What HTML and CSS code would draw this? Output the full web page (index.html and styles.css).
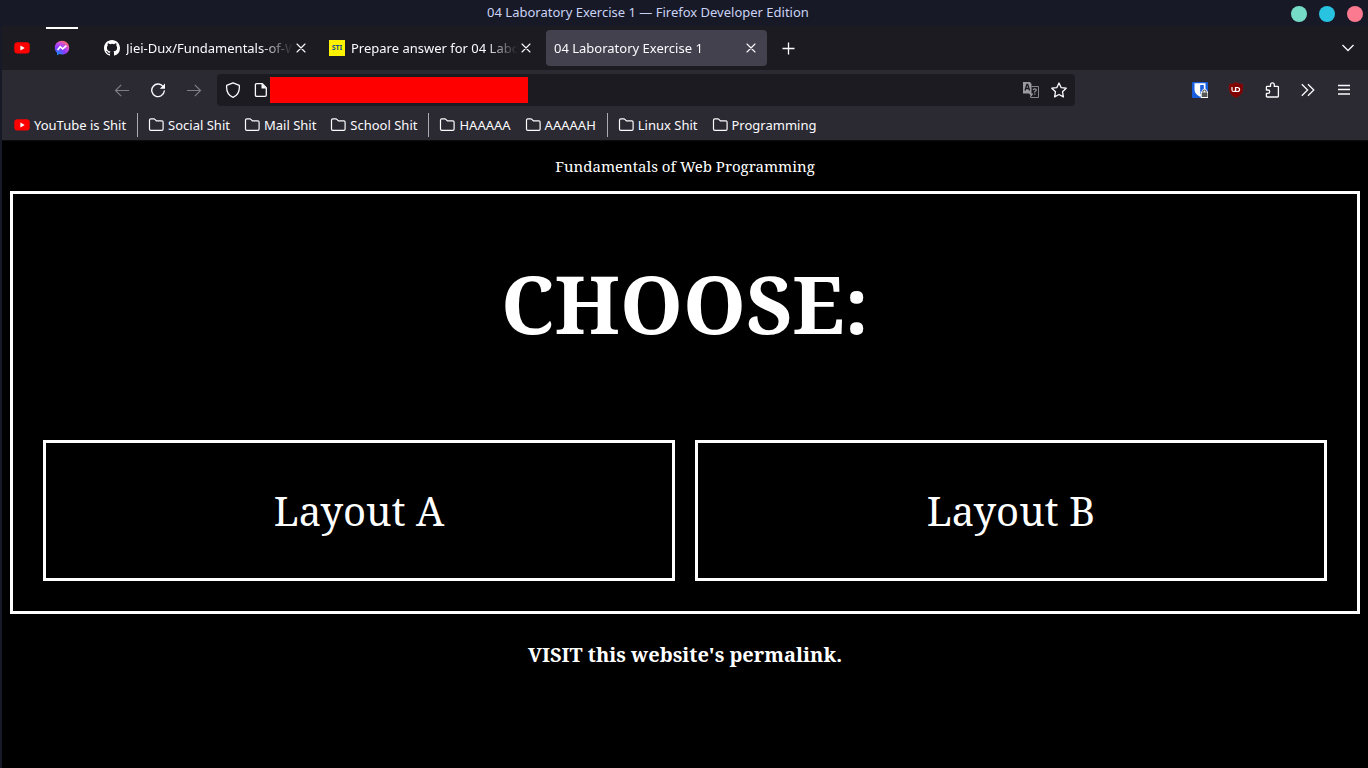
FILE: index.html
```
<!DOCTYPE html>
<html lang="en">
<head>
<meta charset="utf-8">
<meta name="viewport" content="width=device-width, initial-scale=1">
<title>04 Laboratory Exercise 1</title>
<link rel="stylesheet" href="styles.css">
</head>
<body>
<svg class="defs" aria-hidden="true">
  <symbol id="youtube" viewBox="0 0 16 16"><rect x="0.3" y="2.3" width="15.4" height="11.2" rx="3" fill="#f00"/><path d="M6.4 5.4v5l4.3-2.5z" fill="#fff"/></symbol>
  <symbol id="folder" viewBox="0 0 16 16"><path d="M1.500 12V3.200q0-1.300 1.300-1.300h3.100q.6 0 1 .4l1.500 1.600h5.400q1.300 0 1.300 1.300V12q0 1.300-1.300 1.300H2.800q-1.300 0-1.300-1.300z" fill="none" stroke="currentColor" stroke-width="1.200"/></symbol>
  <symbol id="close" viewBox="0 0 16 16"><path d="M4 4l8 8M12 4l-8 8" fill="none" stroke="currentColor" stroke-width="1.1" stroke-linecap="round"/></symbol>
</svg>

<header class="titlebar">
  <span class="window-title">04 Laboratory Exercise 1 — Firefox Developer Edition</span>
  <div class="window-controls">
    <button class="dot dot-min" aria-label="Minimize"></button>
    <button class="dot dot-max" aria-label="Maximize"></button>
    <button class="dot dot-close" aria-label="Close window"></button>
  </div>
</header>

<div class="window">
  <nav class="tabs" aria-label="Tabs">
    <button class="pinned" aria-label="YouTube"><svg class="icon"><use href="#youtube"/></svg></button>
    <button class="pinned notified" aria-label="Messenger">
      <svg class="icon" viewBox="0 0 16 16"><defs><radialGradient id="msg" cx=".18" cy="1" r="1.1"><stop offset="0" stop-color="#0695ff"/><stop offset=".5" stop-color="#8b38ff"/><stop offset=".75" stop-color="#c74be6"/><stop offset="1" stop-color="#ff6968"/></radialGradient></defs><path d="M8 .8C3.900.8.8 3.700.8 7.700c0 2.100.8 3.800 2.200 5.100v2.400l2.400-1.100c.8.300 1.700.4 2.600.4 4.100 0 7.200-2.800 7.200-6.800S12.100.8 8 .8z" fill="url(#msg)"/><path d="M3.600 10l2.600-3.300 2.500 2.100 3.700-3.100" fill="none" stroke="#fff" stroke-width="1.700"/></svg>
    </button>
    <div class="tab first">
      <svg class="icon" viewBox="0 0 16 16"><path fill="#fff" d="M8 0C3.580 0 0 3.580 0 8c0 3.540 2.290 6.530 5.470 7.590.4.070.55-.17.55-.38 0-.19-.01-.82-.01-1.490-2.010.37-2.530-.49-2.690-.94-.09-.23-.48-.94-.82-1.130-.28-.15-.68-.52-.01-.53.63-.01 1.080.58 1.230.82.72 1.210 1.870.87 2.330.66.070-.52.28-.87.51-1.070-1.780-.2-3.640-.89-3.640-3.950 0-.87.31-1.590.82-2.150-.08-.2-.36-1.020.08-2.120 0 0 .67-.21 2.200.82a7.600 7.600 0 014 0c1.530-1.040 2.200-.82 2.200-.82.44 1.100.16 1.920.08 2.120.51.56.82 1.270.82 2.150 0 3.070-1.870 3.750-3.650 3.950.29.25.54.73.54 1.480 0 1.070-.01 1.930-.01 2.200 0 .21.15.46.55.38A8 8 0 0016 8c0-4.420-3.580-8-8-8z"/></svg>
      <span class="tab-label">Jiei-Dux/Fundamentals-of-Web-Programming</span>
      <button class="tab-close" aria-label="Close tab"><svg class="icon"><use href="#close"/></svg></button>
    </div>
    <div class="tab">
      <span class="sti">STI</span>
      <span class="tab-label">Prepare answer for 04 Laboratory Exercise</span>
      <button class="tab-close" aria-label="Close tab"><svg class="icon"><use href="#close"/></svg></button>
    </div>
    <div class="tab active">
      <span class="tab-label">04 Laboratory Exercise 1</span>
      <button class="tab-close" aria-label="Close tab"><svg class="icon"><use href="#close"/></svg></button>
    </div>
    <button class="tool new-tab" aria-label="New tab"><svg class="icon" viewBox="0 0 16 16"><path d="M7.500 2.500v12M1.500 8.500h12" fill="none" stroke="currentColor" stroke-width="1.300"/></svg></button>
    <button class="tool all-tabs" aria-label="List all tabs"><svg class="icon" viewBox="0 0 16 16"><path d="M2.500 5l5.500 5.500L13.500 5" fill="none" stroke="currentColor" stroke-width="1.300"/></svg></button>
  </nav>

  <div class="chrome">
    <div class="navbar">
      <button class="tool dim" aria-label="Back"><svg class="icon" viewBox="0 0 16 16"><path d="M15 8.500H1.500M7.200 2.800L1.500 8.500l5.700 5.700" fill="none" stroke="currentColor" stroke-width="1.200"/></svg></button>
      <button class="tool" aria-label="Reload"><svg class="icon" viewBox="0 0 16 16"><path d="M13.400 5A6.300 6.300 0 1 0 14.300 9" fill="none" stroke="currentColor" stroke-width="1.400" stroke-linecap="round"/><path d="M15 1.500v5.200H9.800z" fill="currentColor"/></svg></button>
      <button class="tool dim" aria-label="Forward"><svg class="icon" viewBox="0 0 16 16"><path d="M1 8.500h13.500M8.800 2.800l5.700 5.700-5.700 5.700" fill="none" stroke="currentColor" stroke-width="1.200"/></svg></button>
      <div class="urlbar">
        <svg class="icon shield" viewBox="0 0 16 16"><path d="M8 .8l6.300 2.600c.5 5.300-1.100 9.800-6.300 11.900C2.800 13.200 1.200 8.700 1.700 3.400z" fill="none" stroke="currentColor" stroke-width="1.300" stroke-linejoin="round"/></svg>
        <svg class="icon page-icon" viewBox="0 0 16 16"><path d="M3.700 1.700h5.600l4 4v7.300q0 1.300-1.300 1.300H3.700q-1.300 0-1.300-1.300V3q0-1.300 1.300-1.300z" fill="none" stroke="currentColor" stroke-width="1.300"/><path d="M8.500 1.500v5h5z" fill="currentColor"/></svg>
        <input class="url" type="text" aria-label="Address">
        <button class="url-action translate" aria-label="Translate page"><svg class="icon" viewBox="0 0 16 16"><path d="M0 0h7l1.500 2v9.500h1.800L8.500 14.500 6 11.500H0z" fill="#9a9a9f"/><path d="M2 8.500L3.900 2.500h.8L6.600 8.500M2.700 6.500h3.200" fill="none" stroke="#1c1b22" stroke-width="1.300"/><path d="M8.500 4.500h7v11h-8v-2" fill="none" stroke="#84848a"/><path d="M10.300 8q0-1.200 1.500-1.200T13.300 8q0 .8-1.500 1.700v.8m0 1v1.300" fill="none" stroke="#9a9a9f" stroke-width="1.200"/></svg></button>
        <button class="url-action" aria-label="Bookmark this page"><svg class="icon" viewBox="0 0 16 16"><path d="M8 1l2.100 4.600 5.100.6-3.700 3.500.9 5.200L8 12.500l-4.400 2.400.9-5.200L.8 6.200l5.100-.6z" fill="none" stroke="currentColor" stroke-width="1.300" stroke-linejoin="round"/></svg></button>
      </div>
      <button class="tool" aria-label="Bitwarden"><svg class="icon" viewBox="0 0 16 16"><rect width="16" height="16" rx="1" fill="#175ddc"/><path d="M2.500 1.300h11v6.200q0 4.500-5.500 7.200Q2.500 12 2.500 7.500z" fill="#fff"/><path d="M8.200 3h3.600v4.600q0 2.800-3.600 4.800z" fill="#175ddc"/><path d="M8.700 9.500h1q.3-2.700 2.800-2.700t2.800 2.700h.7V16H8.700z" fill="#fff"/><rect x="9.700" y="10.400" width="5.700" height="4.700" rx=".6" fill="#555"/><path d="M10.900 10.500V9.400q0-1.400 1.600-1.400t1.600 1.400v1.100" fill="none" stroke="#555" stroke-width="1.100"/></svg></button>
      <button class="tool" aria-label="uBlock Origin"><svg class="icon" viewBox="0 0 16 16"><path d="M8 0q3 1.800 7 2v5.500Q15 12.700 8 16 1 12.700 1 7.500V2q4-.2 7-2z" fill="#800000" stroke="#5c3035" stroke-width=".4"/><path d="M4 5v3q0 1.500 1.700 1.500T7.500 8V5M7.700 5.500v4h1.700q2.200-.1 2.200-2t-2.200-2z" fill="none" stroke="#fff" stroke-width="1.200"/></svg></button>
      <button class="tool" aria-label="Extensions"><svg class="icon" viewBox="0 0 16 16"><path d="M2.400 8V5.200q0-.8.800-.8h3.300V2.800a1.900 1.900 0 0 1 3.800 0v1.600h3.300q.8 0 .8.800v9q0 .8-.8.8H3.200q-.8 0-.8-.8v-2.800H4a1.700 1.700 0 0 0 0-3.400z" fill="none" stroke="currentColor" stroke-width="1.300" stroke-linejoin="round"/></svg></button>
      <button class="tool" aria-label="More tools"><svg class="icon" viewBox="0 0 16 16"><path d="M1.800 2.200L7.600 8l-5.800 5.800M8 2.200L13.800 8 8 13.800" fill="none" stroke="currentColor" stroke-width="1.300"/></svg></button>
      <button class="tool" aria-label="Open application menu"><svg class="icon" viewBox="0 0 16 16"><path d="M2 3.500h12M2 7.500h12M2 12h12" fill="none" stroke="currentColor" stroke-width="1.300"/></svg></button>
    </div>

    <nav class="bookmarks" aria-label="Bookmarks">
      <a class="bookmark" href="#"><svg class="icon"><use href="#youtube"/></svg>YouTube is Shit</a>
      <span class="separator"></span>
      <a class="bookmark" href="#"><svg class="icon"><use href="#folder"/></svg>Social Shit</a>
      <a class="bookmark" href="#"><svg class="icon"><use href="#folder"/></svg>Mail Shit</a>
      <a class="bookmark" href="#"><svg class="icon"><use href="#folder"/></svg>School Shit</a>
      <span class="separator"></span>
      <a class="bookmark" href="#"><svg class="icon"><use href="#folder"/></svg>HAAAAA</a>
      <a class="bookmark" href="#"><svg class="icon"><use href="#folder"/></svg>AAAAAH</a>
      <span class="separator"></span>
      <a class="bookmark" href="#"><svg class="icon"><use href="#folder"/></svg>Linux Shit</a>
      <a class="bookmark" href="#"><svg class="icon"><use href="#folder"/></svg>Programming</a>
    </nav>
  </div>

  <main class="page">
    <p class="course">Fundamentals of Web Programming</p>
    <section class="chooser">
      <h1 class="heading">CHOOSE:</h1>
      <div class="layouts">
        <a class="layout" href="#">Layout A</a>
        <a class="layout" href="#">Layout B</a>
      </div>
    </section>
    <p class="permalink"><a href="#">VISIT this website's permalink.</a></p>
  </main>
</div>
</body>
</html>
```
FILE: styles.css
```
* { box-sizing: border-box; }

body {
  margin: 0;
  min-height: 100vh;
  display: flex;
  flex-direction: column;
  background: #181926;
  color: #fbfbfe;
  font: 13px/18px "Noto Sans", sans-serif;
}

button {
  padding: 0;
  border: 0;
  background: none;
  color: inherit;
  font: inherit;
}

a { color: inherit; text-decoration: none; }

.defs { display: none; }
.icon { display: block; flex: none; width: 16px; height: 16px; }

.titlebar {
  display: grid;
  grid-template-columns: 1fr 72px;
  height: 26px;
  color: #cad3f5;
}
.window-title { padding-top: 3px; text-align: center; }
.window-controls { display: flex; gap: 12px; padding: 6px 5px 0 0; justify-content: flex-end; }
.dot { flex: none; width: 16px; height: 16px; border-radius: 50%; }
.dot-min { background: #76dcc8; }
.dot-max { background: #27c3e0; }
.dot-close { background: #fc7a90; }

.window {
  flex: 1;
  display: flex;
  flex-direction: column;
  margin-left: 2px;
}

.tabs {
  display: flex;
  align-items: center;
  height: 44px;
  padding-right: 2px;
  background: #1c1b22;
}
.pinned {
  position: relative;
  display: grid;
  place-items: center;
  width: 40px;
  height: 44px;
}
.notified::before {
  content: "";
  position: absolute;
  top: 1px;
  left: 4px;
  right: 4px;
  height: 2px;
  background: #fff;
}
.tab {
  display: flex;
  align-items: center;
  flex: 0 1 221px;
  min-width: 0;
  height: 36px;
  margin: 0 2px;
  padding: 0 8px;
  border-radius: 4px;
}
.first { margin-left: 14px; }
.active { background: #42414d; }
.tab-label {
  flex: 1;
  min-width: 0;
  overflow: hidden;
  white-space: nowrap;
  -webkit-mask-image: linear-gradient(to left, transparent, #000 32px);
  mask-image: linear-gradient(to left, transparent, #000 32px);
}
.icon + .tab-label, .sti + .tab-label { margin-left: 6px; }
.tab-close { flex: none; }
.sti {
  flex: none;
  width: 16px;
  background: #fff200;
  color: #14508c;
  font: bold 7px/16px "Noto Sans", sans-serif;
  text-align: center;
}

.tool {
  display: grid;
  place-items: center;
  flex: none;
  width: 36px;
  height: 36px;
}
.new-tab { margin-left: 2px; }
.all-tabs { margin-left: auto; }
.dim { color: #7d7d84; }

.chrome { background: #2b2a33; border-bottom: 1px solid #0c0c0d; }
.navbar {
  display: flex;
  align-items: center;
  height: 40px;
  padding: 0 6px 0 102px;
}
.urlbar {
  flex: 1;
  display: flex;
  align-items: center;
  height: 32px;
  margin: 0 107px 0 5px;
  padding: 0 8px;
  border-radius: 4px;
  background: #1c1b22;
}
.page-icon { margin-left: 12px; }
.url {
  width: 258px;
  height: 26px;
  margin-left: 1px;
  border: 0;
  background: #f00;
  color: #fff;
}
.translate { margin: 0 12px 0 auto; }

.bookmarks {
  display: flex;
  align-items: center;
  height: 30px;
  padding-left: 5px;
}
.bookmark {
  display: flex;
  align-items: center;
  gap: 4px;
  padding: 0 7px;
  white-space: nowrap;
}
.separator { width: 1px; height: 24px; margin: 0 3px 0 4px; background: #aaaab0; }

.page {
  flex: 1;
  padding: 15px 8px;
  background: #000;
  color: #fff;
  font-family: "Noto Serif", "Droid Serif", "DejaVu Serif", serif;
  text-align: center;
}
.course { margin: 0 0 15px; font-size: 15px; line-height: 20px; }
.chooser { padding: 30px; border: 3px solid #fff; }
.heading { margin: 0; padding: 24px 0 82px; font-size: 80px; line-height: 110px; }
.layouts { display: grid; grid-template-columns: 1fr 1fr; gap: 20px; }
.layout { padding: 40px 0; border: 3px solid #fff; font-size: 40px; line-height: 55px; }
.permalink { margin: 27px 0 0; font-size: 20px; font-weight: bold; line-height: 27px; }
```
